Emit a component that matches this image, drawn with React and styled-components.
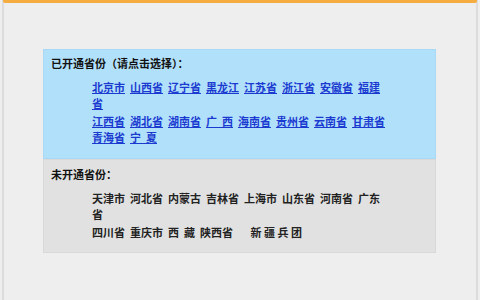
import React from "react";
import styled, { createGlobalStyle } from "styled-components";

const GlobalStyle = createGlobalStyle`
  html, body {
    margin: 0;
    padding: 0;
    background: #eeeeee;
  }
`;

const opened = [
  ["北京市", "山西省", "辽宁省", "黑龙江", "江苏省", "浙江省", "安徽省", "福建省"],
  ["江西省", "湖北省", "湖南省", "广\u00a0\u00a0西", "海南省", "贵州省", "云南省", "甘肃省", "青海省", "宁\u00a0\u00a0夏"],
];

const closed = [
  ["天津市", "河北省", "内蒙古", "吉林省", "上海市", "山东省", "河南省", "广东省"],
  ["四川省", "重庆市", "西\u00a0\u00a0藏", "陕西省", "\u00a0\u00a0\u00a0\u00a0\u00a0新\u00a0疆\u00a0兵\u00a0团"],
];

const Page = styled.div`
  width: 480px;
  height: 300px;
  padding: 0 2px;
  box-sizing: border-box;
  font-family: "Noto Sans CJK SC", "Liberation Sans", sans-serif;
`;

const Frame = styled.div`
  height: 100%;
  box-sizing: border-box;
  background: #eeeeee;
  border-left: 2px solid #dcdcdc;
  border-right: 2px solid #dcdcdc;
  display: flex;
  flex-direction: column;
`;

const TopBar = styled.div`
  height: 3px;
  background: #f5ad40;
  border-radius: 0 0 2px 2px;
  margin: 0 -1px;
`;

const Content = styled.div`
  padding: 46px 0 0 39px;
`;

const Panel = styled.div`
  width: 393px;
  box-sizing: border-box;
  background: ${(p) => (p.$open ? "#b1e0fb" : "#e1e1e1")};
  border: 1px solid ${(p) => (p.$open ? "#a9d9f5" : "#d9d9d9")};
  padding: ${(p) => (p.$open ? "5px 0 13px 7px" : "6px 0 12px 7px")};
`;

const Title = styled.div`
  font-size: 11px;
  font-weight: bold;
  line-height: 16px;
  color: #111;
`;

const List = styled.div`
  width: 299px;
  margin: 8px 0 0 41px;
  display: flex;
  flex-direction: column;
  gap: 2px;
`;

const Row = styled.div`
  font-size: 11px;
  font-weight: bold;
  line-height: 16px;
`;

const Link = styled.a`
  color: #1b3bd0;
  text-decoration: underline;
  margin-right: 5px;
  cursor: pointer;
`;

const Plain = styled.span`
  color: #222;
  margin-right: 5px;
`;

export default function App() {
  return (
    <Page>
      <GlobalStyle />
      <Frame>
        <TopBar />
        <Content>
          <Panel $open>
            <Title>已开通省份（请点击选择）：</Title>
            <List>
              {opened.map((row, i) => (
                <Row key={i}>
                  {row.map((name) => (
                    <Link key={name}>{name}</Link>
                  ))}
                </Row>
              ))}
            </List>
          </Panel>
          <Panel>
            <Title>未开通省份：</Title>
            <List>
              {closed.map((row, i) => (
                <Row key={i}>
                  {row.map((name) => (
                    <Plain key={name}>{name}</Plain>
                  ))}
                </Row>
              ))}
            </List>
          </Panel>
        </Content>
      </Frame>
    </Page>
  );
}
